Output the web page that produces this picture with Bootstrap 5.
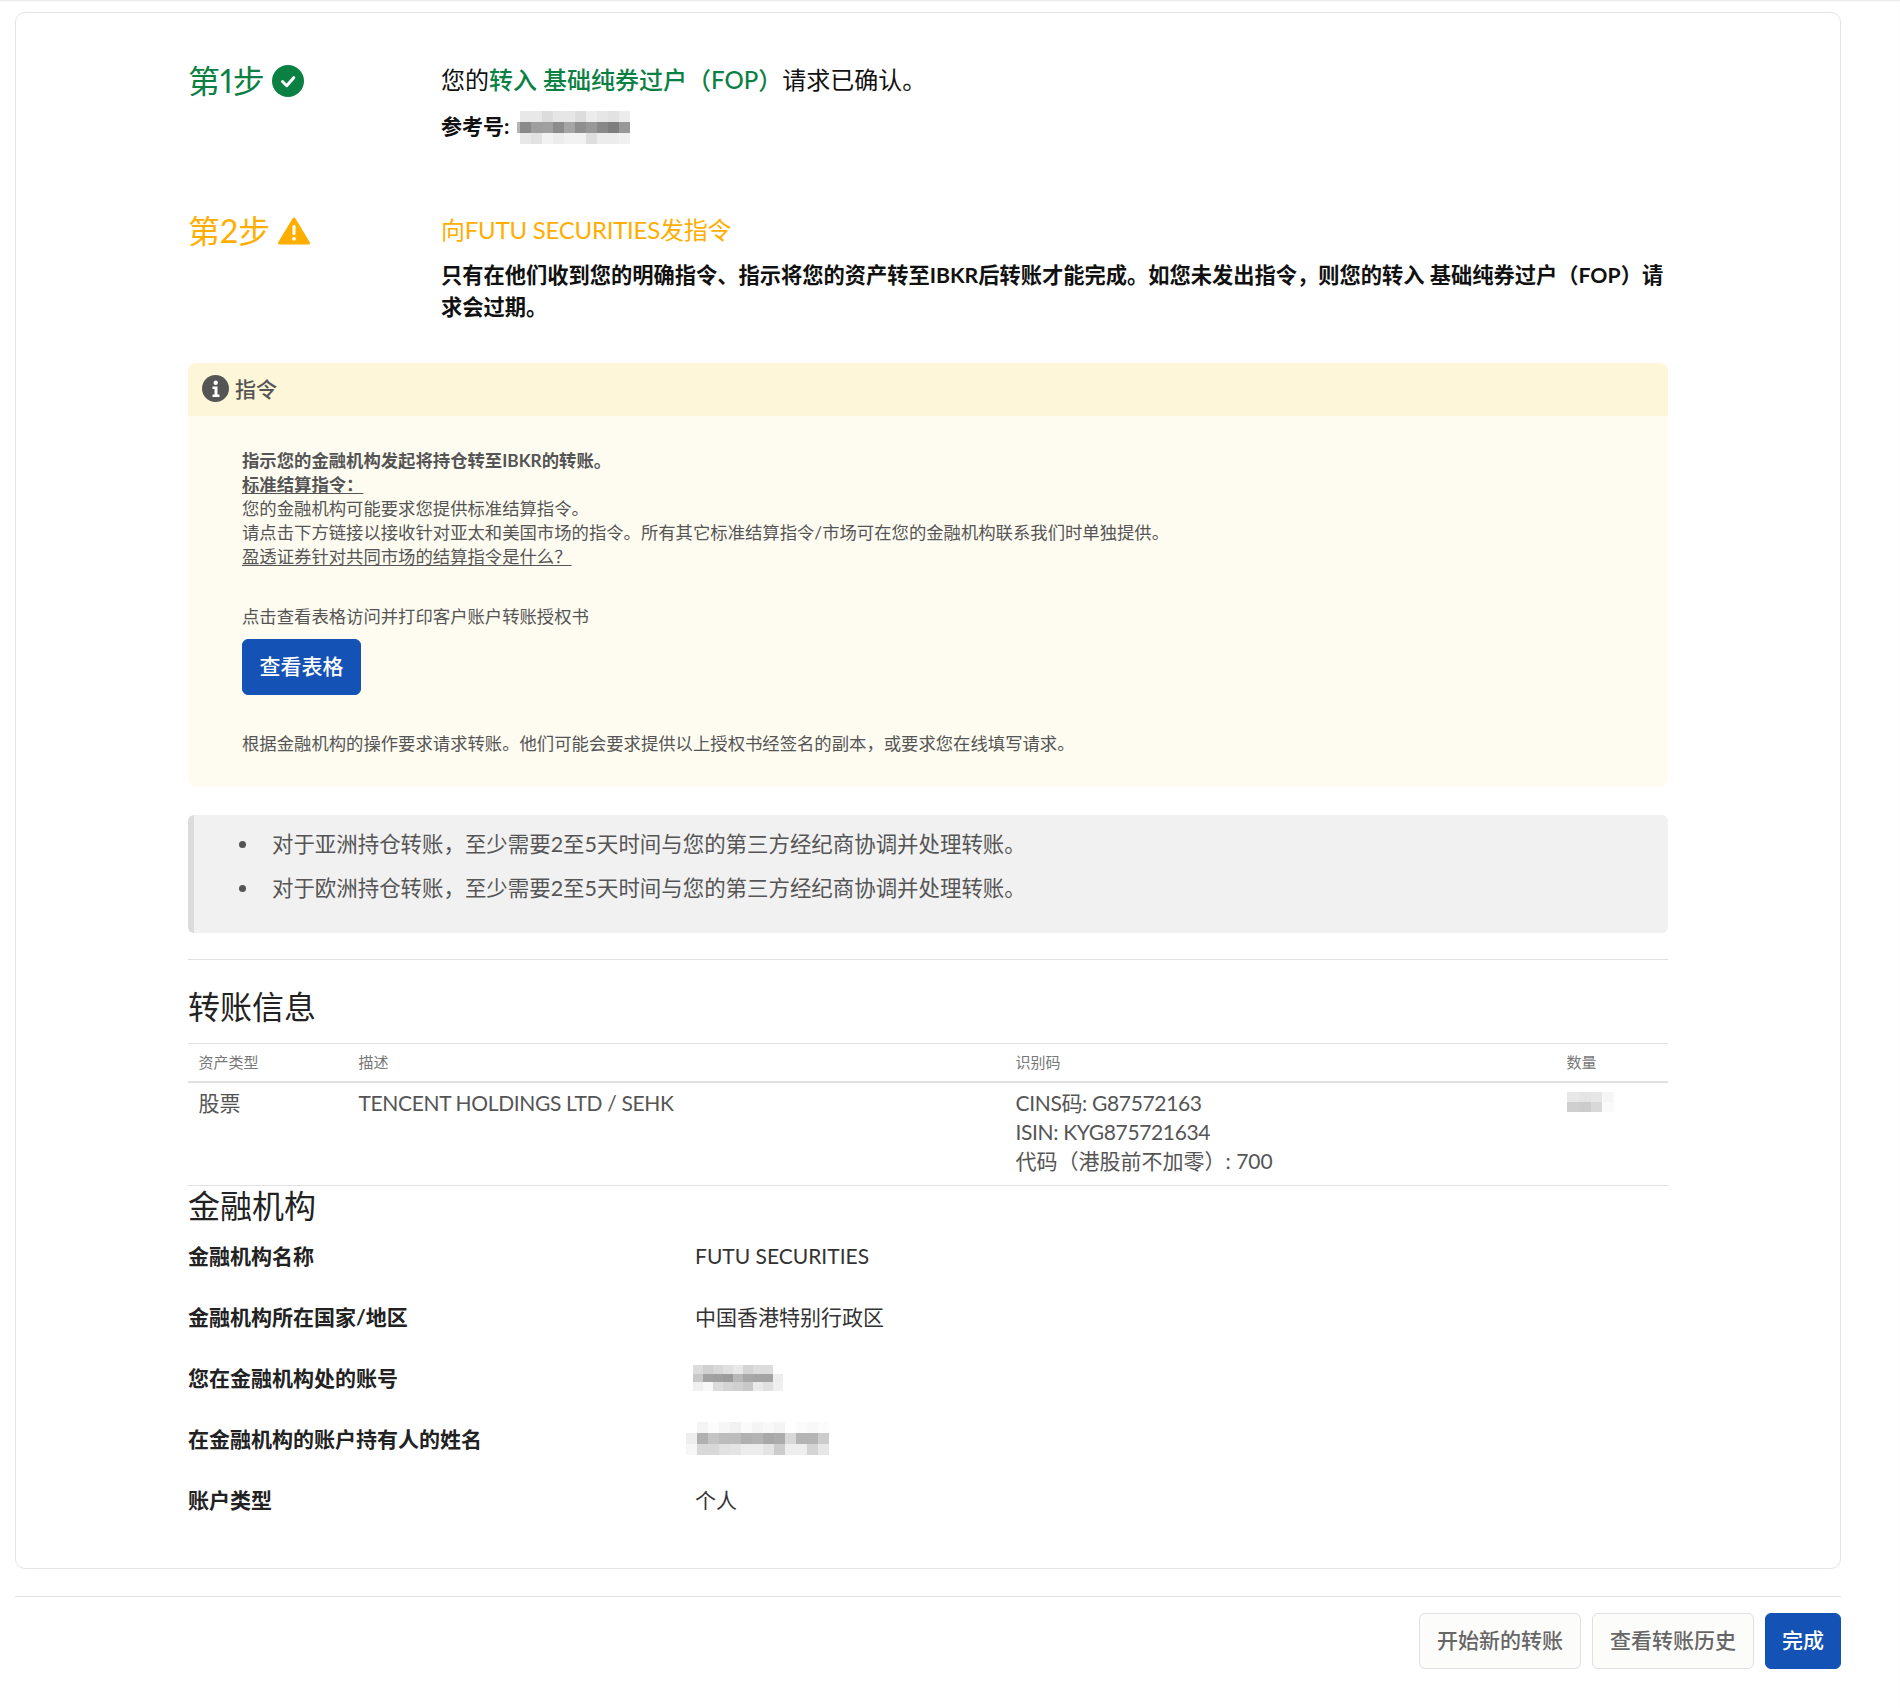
<!DOCTYPE html>
<html lang="zh">
<head>
<meta charset="utf-8">
<title>转账</title>
<link href="https://cdn.jsdelivr.net/npm/bootstrap@5.3.0/dist/css/bootstrap.min.css" rel="stylesheet">
<style>
html,body{background:#fff;}
body{font-family:"Lato","Noto Sans CJK SC",sans-serif;font-size:21px;line-height:1.5;color:#222;height:1708px;box-shadow:inset 0 2px 2px -1px #e6e6e6;}
.page-wrap{padding:12px 59px 0 15px;}
.main-card{border:1px solid #e4e4e4;border-radius:10px;height:1557px;padding:40px 172px 0 172px;background:#fff;}
.step-row{display:flex;}
.step-head{width:253px;flex:none;font-size:32px;line-height:42px;display:flex;align-items:center;gap:8px;height:56px;font-variant-numeric:proportional-nums;}
.step-first{gap:7px;}
.step-body{flex:1;min-width:0;}
.c-ok{color:#0b8043;}
.line-lg{font-size:24px;line-height:32px;margin:11px 0 0;color:#111;}
.c-warn,.line-lg.c-warn{color:#ffae00;}
.line-warn{letter-spacing:-.25px;}
.line-lg b{font-weight:500;}
.ref-line{font-size:21px;font-weight:700;display:flex;align-items:center;gap:8px;margin-top:11px;height:38px;color:#111;}
.m-ref{margin-top:2px;}
.step-two{margin-top:58px;}
.strong-lines{font-size:21.25px;font-weight:700;line-height:32px;margin:13px 0 0;color:#111;}
.instr{margin-top:40px;background:#fefcf1;border-radius:8px;height:424px;color:#555;font-size:17.35px;line-height:24px;}
.instr-head{height:53px;background:#fdf6d8;border-radius:8px 8px 0 0;padding:0 14px 2px;display:flex;align-items:center;gap:6px;font-size:21px;font-weight:500;color:#555;}
.instr-body{padding:33px 54px 0;}
.instr-body p{margin:0;}
.instr-body u{text-underline-offset:2px;}
.gap-a{margin-top:36px !important;}
.btn-prim{--bs-btn-bg:#1453b5;--bs-btn-border-color:#1453b5;--bs-btn-color:#fff;--bs-btn-hover-bg:#10479d;--bs-btn-hover-border-color:#10479d;--bs-btn-hover-color:#fff;font-size:21px;font-weight:500;line-height:32px;padding:10px 16px 12px;border-radius:6px;white-space:nowrap;}
.btn-sec{--bs-btn-bg:#fcfcfb;--bs-btn-border-color:#e0e0e0;--bs-btn-color:#666;--bs-btn-hover-bg:#f2f2f2;--bs-btn-hover-border-color:#ddd;--bs-btn-hover-color:#444;font-size:21px;font-weight:500;line-height:32px;padding:10px 17px 12px;border-radius:6px;white-space:nowrap;}
.view-btn{margin-top:10px;display:block;width:119px;padding-left:0;padding-right:0;}
.tail-note{margin-top:37px !important;}
.note-box{margin-top:28px;height:118px;background:#f1f1f1;border-left:6px solid #dcdcdc;border-radius:6px;padding:14px 0 0;color:#555;font-size:21.45px;}
.note-box ul{margin:0;padding-left:66px;}
.note-box li{line-height:31.5px;margin:0 0 12px;padding-left:12px;}
.rule-a{margin:26px 0 0;border:0;border-top:1px solid #e0e0e0;opacity:1;}
.sect-title{font-size:32px;font-weight:400;line-height:48px;margin:23px 0 0;color:#222;}
.xfer{margin:12px 0 0;--bs-table-bg:transparent;border-top:1px solid #e0e0e0;color:#555;}
.xfer th{font-size:15px;font-weight:400;color:#777;line-height:21px;padding:8px 10.5px 8px;border-bottom:2px solid #e0e0e0;}
.xfer td{font-size:21px;line-height:29px;padding:5px 10.5px 10px;border-bottom:1px solid #e0e0e0;color:#555;}
.lat-tight{letter-spacing:-.35px;}
.fin-title{margin:0;font-size:32px;line-height:38px;color:#222;padding-top:1px;font-weight:400;}
.fin-row{display:flex;height:61px;align-items:center;}
.fin-row b{width:507px;flex:none;color:#222;font-weight:700;font-size:21px;}
.fin-row span{color:#333;}
.rule-foot{margin-top:27px;}
.foot-row{display:flex;justify-content:flex-end;gap:11px;margin-top:16px;}
.mosaic{display:block;flex:none;}
.m-acct{margin-left:-2px;}
.m-name{margin-left:-9px;}
.m-qty{margin:4px 0 0 0;}
</style>
</head>
<body>
<div class="page-wrap">
  <div class="card main-card">
    <div class="step-row">
      <div class="step-head step-first c-ok">第1步
        <svg width="32" height="32" viewBox="0 0 32 32"><circle cx="16" cy="16" r="16" fill="#0b8043"/><path d="M10.5 16.5l4.2 4.2 7-8" fill="none" stroke="#fff" stroke-width="3" stroke-linecap="round" stroke-linejoin="round"/></svg>
      </div>
      <div class="step-body">
        <p class="line-lg">您的<b class="c-ok">转入 基础纯券过户（FOP）</b>请求已确认。</p>
        <div class="ref-line">参考号:
          <svg class="mosaic m-ref" width="113" height="33" viewBox="-0.3 0 10.3 3" preserveAspectRatio="none" shape-rendering="crispEdges" aria-hidden="true"><rect x="-0.3" y="1" width="0.3" height="1" fill="#b5b5b5"/><rect x="0" y="0" width="1" height="1" fill="#e8e8e8"/><rect x="1" y="0" width="1" height="1" fill="#e8e8e8"/><rect x="2" y="0" width="1" height="1" fill="#dcdcdc"/><rect x="3" y="0" width="1" height="1" fill="#e6e6e6"/><rect x="4" y="0" width="1" height="1" fill="#e6e6e6"/><rect x="5" y="0" width="1" height="1" fill="#dcdcdc"/><rect x="6" y="0" width="1" height="1" fill="#ececec"/><rect x="7" y="0" width="1" height="1" fill="#e6e6e6"/><rect x="8" y="0" width="1" height="1" fill="#e2e2e2"/><rect x="9" y="0" width="1" height="1" fill="#ececec"/><rect x="0" y="1" width="1" height="1" fill="#8a8a8a"/><rect x="1" y="1" width="1" height="1" fill="#9e9e9e"/><rect x="2" y="1" width="1" height="1" fill="#a0a0a0"/><rect x="3" y="1" width="1" height="1" fill="#8c8c8c"/><rect x="4" y="1" width="1" height="1" fill="#a5a5a5"/><rect x="5" y="1" width="1" height="1" fill="#8e8e8e"/><rect x="6" y="1" width="1" height="1" fill="#989898"/><rect x="7" y="1" width="1" height="1" fill="#888888"/><rect x="8" y="1" width="1" height="1" fill="#7e7e7e"/><rect x="9" y="1" width="1" height="1" fill="#989898"/><rect x="0" y="2" width="1" height="1" fill="#e8e8e8"/><rect x="1" y="2" width="1" height="1" fill="#e2e2e2"/><rect x="2" y="2" width="1" height="1" fill="#f2f2f2"/><rect x="3" y="2" width="1" height="1" fill="#ececec"/><rect x="4" y="2" width="1" height="1" fill="#f2f2f2"/><rect x="5" y="2" width="1" height="1" fill="#f2f2f2"/><rect x="6" y="2" width="1" height="1" fill="#dedede"/><rect x="7" y="2" width="1" height="1" fill="#ececec"/><rect x="8" y="2" width="1" height="1" fill="#ececec"/><rect x="9" y="2" width="1" height="1" fill="#f0f0f0"/></svg>
        </div>
      </div>
    </div>
    <div class="step-row step-two">
      <div class="step-head c-warn">第2步
        <svg width="32" height="28" viewBox="0 0 32 28"><path d="M16 2L30.5 26H1.5z" fill="#ffae00" stroke="#ffae00" stroke-width="3" stroke-linejoin="round"/><rect x="14.5" y="8" width="3" height="10" rx="1.2" fill="#fff"/><circle cx="16" cy="21.8" r="1.9" fill="#fff"/></svg>
      </div>
      <div class="step-body">
        <div class="line-lg line-warn c-warn">向FUTU SECURITIES发指令</div>
        <p class="strong-lines">只有在他们收到您的明确指令、指示将您的资产转至IBKR后转账才能完成。如您未发出指令，则您的转入 基础纯券过户（FOP）请求会过期。</p>
      </div>
    </div>
    <div class="instr">
      <div class="instr-head">
        <svg width="27" height="27" viewBox="0 0 27 27"><circle cx="13.5" cy="13.5" r="13.5" fill="#555"/><circle cx="13.7" cy="7.8" r="2.2" fill="#fff"/><path d="M10.5 11.5h5v8h2v2.4h-7v-2.4h2v-5.6h-2z" fill="#fff"/></svg>
        指令
      </div>
      <div class="instr-body">
        <p class="fw-bold">指示您的金融机构发起将持仓转至IBKR的转账。</p>
        <p class="fw-bold"><u>标准结算指令：</u></p>
        <p>您的金融机构可能要求您提供标准结算指令。</p>
        <p>请点击下方链接以接收针对亚太和美国市场的指令。所有其它标准结算指令/市场可在您的金融机构联系我们时单独提供。</p>
        <p><u>盈透证券针对共同市场的结算指令是什么？</u></p>
        <p class="gap-a">点击查看表格访问并打印客户账户转账授权书</p>
        <a class="btn btn-prim view-btn" href="#">查看表格</a>
        <p class="tail-note">根据金融机构的操作要求请求转账。他们可能会要求提供以上授权书经签名的副本，或要求您在线填写请求。</p>
      </div>
    </div>
    <div class="note-box">
      <ul>
        <li>对于亚洲持仓转账，至少需要2至5天时间与您的第三方经纪商协调并处理转账。</li>
        <li>对于欧洲持仓转账，至少需要2至5天时间与您的第三方经纪商协调并处理转账。</li>
      </ul>
    </div>
    <hr class="rule-a">
    <h3 class="sect-title">转账信息</h3>
    <table class="table xfer">
      <colgroup><col style="width:160px"><col style="width:657px"><col style="width:551px"><col></colgroup>
      <thead><tr><th>资产类型</th><th>描述</th><th>识别码</th><th>数量</th></tr></thead>
      <tbody><tr>
        <td>股票</td>
        <td class="lat-tight">TENCENT HOLDINGS LTD / SEHK</td>
        <td><span class="lat-tight">CINS码: G87572163</span><br><span class="lat-tight">ISIN: KYG875721634</span><br>代码（港股前不加零）: 700</td>
        <td><svg class="mosaic m-qty" width="47" height="20" viewBox="0 0 4 2" preserveAspectRatio="none" shape-rendering="crispEdges" aria-hidden="true"><rect x="0" y="0" width="1" height="1" fill="#e8e8e8"/><rect x="1" y="0" width="1" height="1" fill="#e4e4e4"/><rect x="2" y="0" width="1" height="1" fill="#e6e6e6"/><rect x="3" y="0" width="1" height="1" fill="#f6f6f6"/><rect x="0" y="1" width="1" height="1" fill="#cfcfcf"/><rect x="1" y="1" width="1" height="1" fill="#cccccc"/><rect x="2" y="1" width="1" height="1" fill="#d8d8d8"/><rect x="3" y="1" width="1" height="1" fill="#fafafa"/></svg></td>
      </tr></tbody>
    </table>
    <h3 class="fin-title">金融机构</h3>
    <div>
      <div class="fin-row"><b>金融机构名称</b><span>FUTU SECURITIES</span></div>
      <div class="fin-row"><b>金融机构所在国家/地区</b><span>中国香港特别行政区</span></div>
      <div class="fin-row"><b>您在金融机构处的账号</b>
        <svg class="mosaic m-acct" width="90" height="26" viewBox="0 0 9 3" preserveAspectRatio="none" shape-rendering="crispEdges" aria-hidden="true"><rect x="0" y="0" width="1" height="1" fill="#dcdcdc"/><rect x="1" y="0" width="1" height="1" fill="#d0d0d0"/><rect x="2" y="0" width="1" height="1" fill="#d8d8d8"/><rect x="3" y="0" width="1" height="1" fill="#e0e0e0"/><rect x="4" y="0" width="1" height="1" fill="#e8e8e8"/><rect x="5" y="0" width="1" height="1" fill="#d4d4d4"/><rect x="6" y="0" width="1" height="1" fill="#dcdcdc"/><rect x="7" y="0" width="1" height="1" fill="#dcdcdc"/><rect x="0" y="1" width="1" height="1" fill="#c8c8c8"/><rect x="1" y="1" width="1" height="1" fill="#a2a2a2"/><rect x="2" y="1" width="1" height="1" fill="#a0a0a0"/><rect x="3" y="1" width="1" height="1" fill="#9c9c9c"/><rect x="4" y="1" width="1" height="1" fill="#b8b8b8"/><rect x="5" y="1" width="1" height="1" fill="#a8a8a8"/><rect x="6" y="1" width="1" height="1" fill="#a4a4a4"/><rect x="7" y="1" width="1" height="1" fill="#a4a4a4"/><rect x="8" y="1" width="1" height="1" fill="#eeeeee"/><rect x="0" y="2" width="1" height="1" fill="#f0f0f0"/><rect x="1" y="2" width="1" height="1" fill="#f8f8f8"/><rect x="2" y="2" width="1" height="1" fill="#dcdcdc"/><rect x="3" y="2" width="1" height="1" fill="#d4d4d4"/><rect x="4" y="2" width="1" height="1" fill="#d0d0d0"/><rect x="5" y="2" width="1" height="1" fill="#c8c8c8"/><rect x="6" y="2" width="1" height="1" fill="#eaeaea"/><rect x="7" y="2" width="1" height="1" fill="#e0e0e0"/><rect x="8" y="2" width="1" height="1" fill="#f0f0f0"/></svg></div>
      <div class="fin-row"><b>在金融机构的账户持有人的姓名</b>
        <svg class="mosaic m-name" width="143" height="33" viewBox="0 0 13 3" preserveAspectRatio="none" shape-rendering="crispEdges" aria-hidden="true"><rect x="1" y="0" width="1" height="1" fill="#f4f4f4"/><rect x="2" y="0" width="1" height="1" fill="#fcfcfc"/><rect x="3" y="0" width="1" height="1" fill="#f6f6f6"/><rect x="4" y="0" width="1" height="1" fill="#f2f2f2"/><rect x="5" y="0" width="1" height="1" fill="#fafafa"/><rect x="6" y="0" width="1" height="1" fill="#f4f4f4"/><rect x="7" y="0" width="1" height="1" fill="#f8f8f8"/><rect x="8" y="0" width="1" height="1" fill="#f4f4f4"/><rect x="10" y="0" width="1" height="1" fill="#fbfbfb"/><rect x="11" y="0" width="1" height="1" fill="#f8f8f8"/><rect x="12" y="0" width="1" height="1" fill="#fcfcfc"/><rect x="0" y="1" width="1" height="1" fill="#eeeeee"/><rect x="1" y="1" width="1" height="1" fill="#b0b0b0"/><rect x="2" y="1" width="1" height="1" fill="#c4c4c4"/><rect x="3" y="1" width="1" height="1" fill="#bcbcbc"/><rect x="4" y="1" width="1" height="1" fill="#bcbcbc"/><rect x="5" y="1" width="1" height="1" fill="#b0b0b0"/><rect x="6" y="1" width="1" height="1" fill="#b4b4b4"/><rect x="7" y="1" width="1" height="1" fill="#a8a8a8"/><rect x="8" y="1" width="1" height="1" fill="#acacac"/><rect x="9" y="1" width="1" height="1" fill="#d8d8d8"/><rect x="10" y="1" width="1" height="1" fill="#b4b4b4"/><rect x="11" y="1" width="1" height="1" fill="#b4b4b4"/><rect x="12" y="1" width="1" height="1" fill="#cccccc"/><rect x="0" y="2" width="1" height="1" fill="#f6f6f6"/><rect x="1" y="2" width="1" height="1" fill="#d8d8d8"/><rect x="2" y="2" width="1" height="1" fill="#d8d8d8"/><rect x="3" y="2" width="1" height="1" fill="#e2e2e2"/><rect x="4" y="2" width="1" height="1" fill="#e4e4e4"/><rect x="5" y="2" width="1" height="1" fill="#ececec"/><rect x="6" y="2" width="1" height="1" fill="#ececec"/><rect x="7" y="2" width="1" height="1" fill="#e4e4e4"/><rect x="8" y="2" width="1" height="1" fill="#cccccc"/><rect x="9" y="2" width="1" height="1" fill="#eeeeee"/><rect x="10" y="2" width="1" height="1" fill="#eeeeee"/><rect x="11" y="2" width="1" height="1" fill="#d4d4d4"/><rect x="12" y="2" width="1" height="1" fill="#e6e6e6"/></svg></div>
      <div class="fin-row"><b>账户类型</b><span>个人</span></div>
    </div>
  </div>
  <hr class="rule-a rule-foot">
  <div class="foot-row">
    <a class="btn btn-sec" href="#">开始新的转账</a>
    <a class="btn btn-sec" href="#">查看转账历史</a>
    <a class="btn btn-prim" href="#">完成</a>
  </div>
</div>
<script src="https://cdn.jsdelivr.net/npm/bootstrap@5.3.0/dist/js/bootstrap.bundle.min.js"></script>
</body>
</html>
